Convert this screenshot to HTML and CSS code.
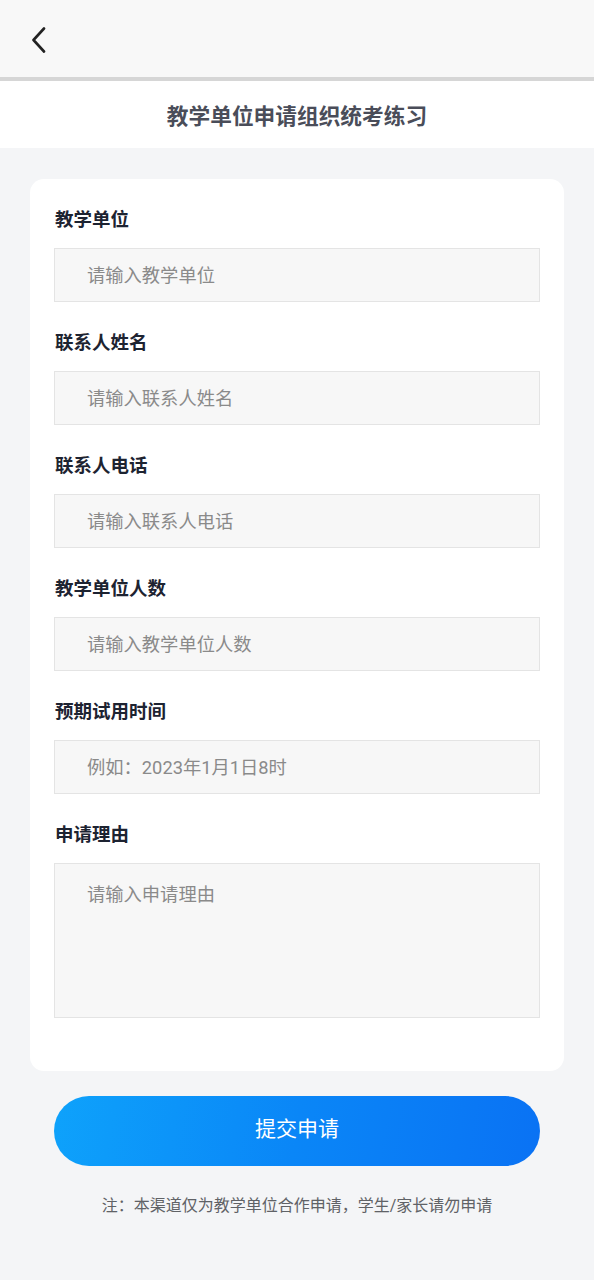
FILE: index.html
```html
<!DOCTYPE html>
<html lang="zh-CN">
<head>
    <meta charset="UTF-8">
    <meta name="viewport" content="width=device-width, initial-scale=1.0">
    <title>教学单位申请组织统考练习</title>
    <link rel="stylesheet" href="styles.css">
</head>
<body>
    <div class="nav-bar">
        <svg class="back-icon" width="16" height="26" viewBox="0 0 16 26">
            <path d="M13 1.5 L2.5 13 L13 24.5" fill="none" stroke="#222" stroke-width="2.6" stroke-linecap="round" stroke-linejoin="round"/>
        </svg>
    </div>
    <div class="title-bar">教学单位申请组织统考练习</div>

    <div class="content">
        <div class="form-card">
            <div class="field">
                <div class="label">教学单位</div>
                <input class="input" type="text" placeholder="请输入教学单位">
            </div>
            <div class="field">
                <div class="label">联系人姓名</div>
                <input class="input" type="text" placeholder="请输入联系人姓名">
            </div>
            <div class="field">
                <div class="label">联系人电话</div>
                <input class="input" type="text" placeholder="请输入联系人电话">
            </div>
            <div class="field">
                <div class="label">教学单位人数</div>
                <input class="input" type="text" placeholder="请输入教学单位人数">
            </div>
            <div class="field">
                <div class="label">预期试用时间</div>
                <input class="input" type="text" placeholder="例如：2023年1月1日8时">
            </div>
            <div class="field">
                <div class="label">申请理由</div>
                <textarea class="input textarea" placeholder="请输入申请理由"></textarea>
            </div>
        </div>

        <button class="submit-button">提交申请</button>
        <p class="note">注：本渠道仅为教学单位合作申请，学生/家长请勿申请</p>
    </div>
</body>
</html>
```

FILE: styles.css
```css
body {
    font-family: Roboto, "Noto Sans CJK SC", sans-serif;
    margin: 0;
    background-color: #f4f5f7;
    min-height: 1280px;
}
.nav-bar {
    height: 77px;
    background-color: #f8f8f8;
    border-bottom: 4px solid #d6d6d6;
    display: flex;
    align-items: center;
    padding-left: 31px;
}
.back-icon {
    display: block;
    margin-top: 2px;
}
.title-bar {
    height: 67px;
    background-color: #fff;
    display: flex;
    align-items: center;
    justify-content: center;
    font-size: 21.7px;
    font-weight: bold;
    color: #4a4d59;
}
.content {
    padding: 31px 30px 0;
}
.form-card {
    background-color: #fff;
    border-radius: 14px;
    padding: 29px 24px 53px;
    display: flex;
    flex-direction: column;
    gap: 29px;
}
.field {
    display: flex;
    flex-direction: column;
}
.label {
    font-size: 18.5px;
    font-weight: bold;
    color: #1d2331;
    line-height: 24px;
    margin-left: 1px;
    margin-bottom: 16px;
}
.input {
    height: 54px;
    box-sizing: border-box;
    border: 1px solid #e4e4e4;
    background-color: #f7f7f7;
    padding: 0 32px;
    font-family: Roboto, "Noto Sans CJK SC", sans-serif;
    font-size: 18.3px;
    color: #333;
    outline: none;
    border-radius: 0;
}
.input::placeholder {
    color: #8a8a8a;
}
.textarea {
    height: 155px;
    padding-top: 18px;
    resize: none;
    line-height: 26px;
}
.submit-button {
    display: block;
    width: 486px;
    height: 70px;
    margin: 25px 0 0 24px;
    padding: 0 0 8px;
    border: none;
    border-radius: 35px;
    background: linear-gradient(100deg, #0ea2fb 0%, #0a86f7 50%, #0a72f4 100%);
    color: #fff;
    font-family: Roboto, "Noto Sans CJK SC", sans-serif;
    font-size: 21px;
}
.note {
    margin: 26px 0 0;
    text-align: center;
    font-size: 16px;
    color: #606266;
}
```
